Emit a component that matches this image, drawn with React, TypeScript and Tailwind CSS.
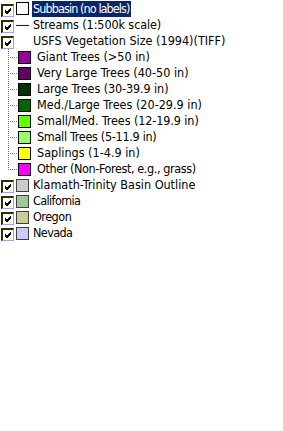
import React from "react";

const font = { fontFamily: '"DejaVu Sans Condensed", "Liberation Sans", Arial, sans-serif' };

function Check() {
  return (
    <div className="relative w-[13px] h-[13px] shrink-0 bg-white border-t-2 border-l-2 border-t-[#2e2e00] border-l-[#2e2e00] border-r border-b border-r-[#a0a0f0] border-b-[#a0a0f0]">
      <svg width="11" height="10" viewBox="0 0 11 10" className="absolute left-0 top-0">
        <path d="M2 4 L4 6 L8 2 M2 5 L4 7 L8 3 M2 6 L4 8 L8 4" stroke="#000" strokeWidth="1" fill="none" shapeRendering="crispEdges" />
      </svg>
    </div>
  );
}

function Swatch({ color, border = "#000" }: { color: string; border?: string }) {
  return <div className="w-[13px] h-[13px] shrink-0 border" style={{ backgroundColor: color, borderColor: border }} />;
}

type Sub = { color: string; label: string; tr?: string };
const subs: Sub[] = [
  { color: "#990099", label: "Giant Trees (>50 in)" },
  { color: "#660066", label: "Very Large Trees (40-50 in)" },
  { color: "#003300", label: "Large Trees (30-39.9 in)", tr: "tracking-[-0.1px]" },
  { color: "#006600", label: "Med./Large Trees (20-29.9 in)" },
  { color: "#66ff00", label: "Small/Med. Trees (12-19.9 in)", tr: "tracking-[-0.1px]" },
  { color: "#99ff66", label: "Small Trees (5-11.9 in)", tr: "tracking-[-0.3px]" },
  { color: "#ffff00", label: "Saplings (1-4.9 in)" },
  { color: "#ff00ff", label: "Other (Non-Forest, e.g., grass)", tr: "tracking-[-0.4px]" },
];

const bottoms: Sub[] = [
  { color: "#cccccc", label: "Klamath-Trinity Basin Outline" },
  { color: "#99cc99", label: "California", tr: "tracking-[-0.6px]" },
  { color: "#cccc99", label: "Oregon", tr: "tracking-[-0.5px]" },
  { color: "#ccccff", label: "Nevada", tr: "tracking-[-0.6px]" },
];

function Tree({ last }: { last: boolean }) {
  const dots: React.ReactNode[] = [];
  const vEnd = last ? 9 : 16;
  for (let y = 0; y < vEnd; y += 2) dots.push(<rect key={"v" + y} x={8} y={y} width={1} height={1} fill="#808080" />);
  for (let x = 10; x < 18; x += 2) dots.push(<rect key={"h" + x} x={x} y={8} width={1} height={1} fill="#808080" />);
  return (
    <svg width="18" height="16" className="shrink-0" shapeRendering="crispEdges">
      {dots}
    </svg>
  );
}

export default function App() {
  return (
    <div className="w-[283px] h-[431px] bg-white text-black text-[12.5px] leading-[16px] pt-[1px] whitespace-nowrap" style={font}>
      <div className="flex items-center h-4">
        <div className="ml-[1px] mt-[2px]"><Check /></div>
        <div className="ml-[2px] mb-[2px]"><Swatch color="#ffffff" /></div>
        <span className="ml-[3px] px-[1px] bg-[#0a246a] text-white h-4 tracking-[-0.9px]">Subbasin (no labels)</span>
      </div>
      <div className="flex items-center h-4">
        <div className="ml-[1px] mt-[2px]"><Check /></div>
        <div className="ml-[2px] w-[13px] h-[13px] flex items-center"><div className="w-[13px] h-[1px] bg-[#0000ff]" /></div>
        <span className="ml-[4px] tracking-[-0.1px]">Streams (1:500k scale)</span>
      </div>
      <div className="flex items-center h-4">
        <div className="ml-[1px] mt-[2px]"><Check /></div>
        <span className="ml-[19px]">USFS Vegetation Size (1994)(TIFF)</span>
      </div>
      {subs.map((s, i) => (
        <div key={s.label} className="flex items-center h-4">
          <Tree last={i === subs.length - 1} />
          <Swatch color={s.color} />
          <span className={"ml-[6px] " + (s.tr ?? "")}>{s.label}</span>
        </div>
      ))}
      {bottoms.map((s) => (
        <div key={s.label} className="flex items-center h-4">
          <div className="ml-[1px] mt-[2px]"><Check /></div>
          <div className="ml-[2px]"><Swatch color={s.color} border="#404040" /></div>
          <span className={"ml-[4px] " + (s.tr ?? "")}>{s.label}</span>
        </div>
      ))}
    </div>
  );
}
